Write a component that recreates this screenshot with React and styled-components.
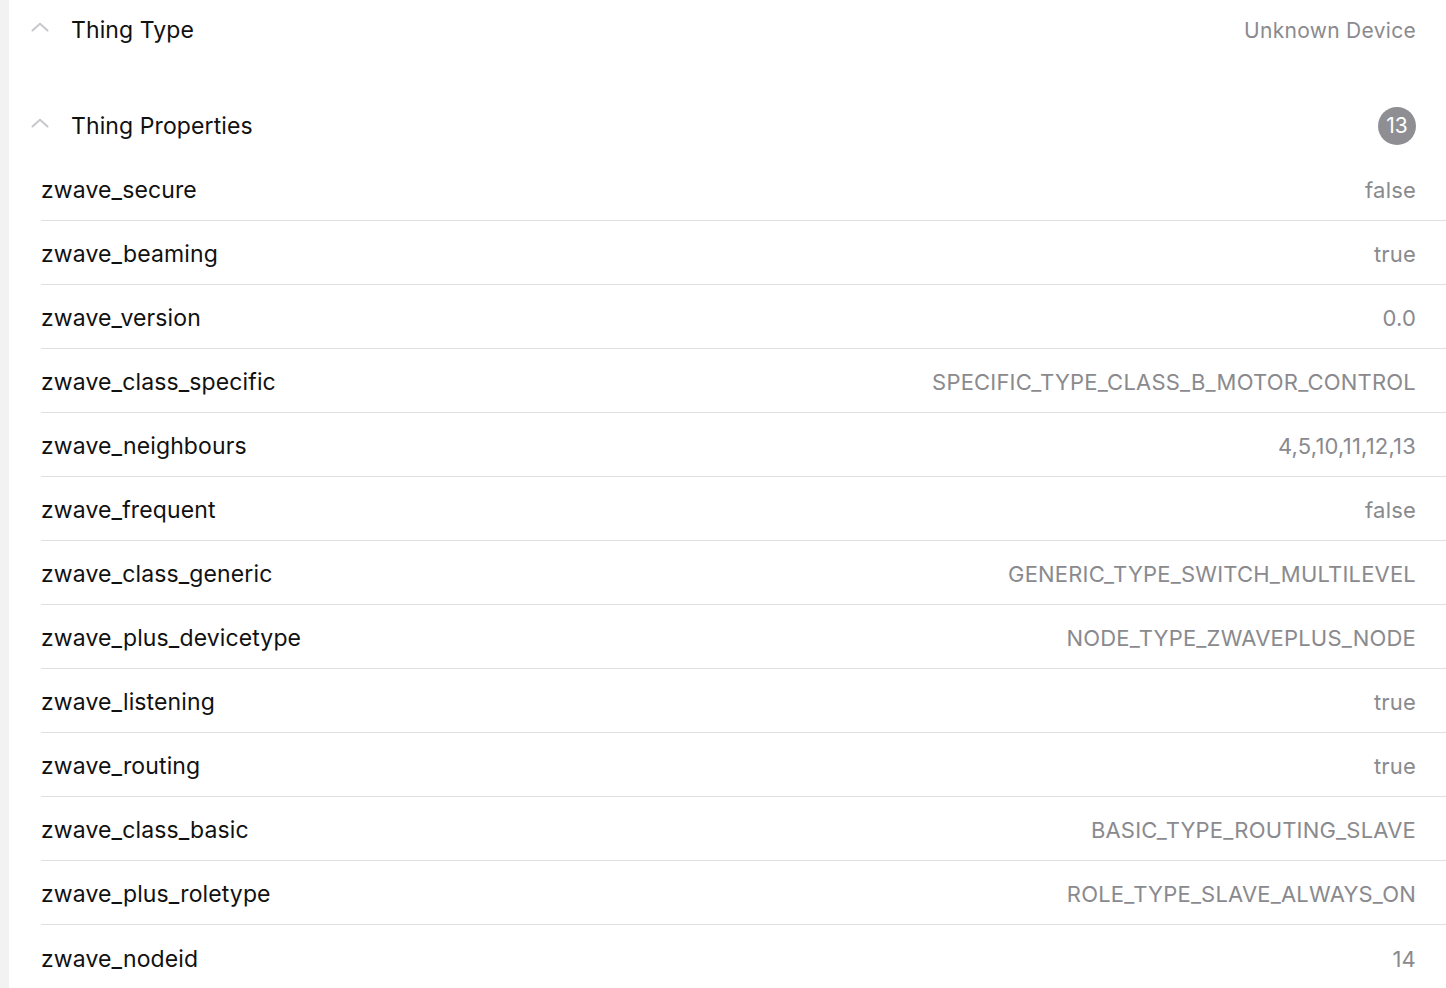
import React from "react";
import styled, { createGlobalStyle } from "styled-components";

const Global = createGlobalStyle`
  html, body { margin: 0; padding: 0; background: #ffffff; }
  body { font-family: Inter, "Noto Sans", sans-serif; -webkit-font-smoothing: antialiased; }
`;

const Page = styled.div`
  display: flex;
  min-height: 988px;
`;

const Strip = styled.div`
  width: 9px;
  flex: 0 0 9px;
  background: #f2f2f2;
`;

const Main = styled.div`
  flex: 1;
  background: #fff;
  display: flex;
  flex-direction: column;
`;

const Section = styled.section`
  display: flex;
  flex-direction: column;
  margin-bottom: ${(p) => p.$gap || 0}px;
`;

const Header = styled.div`
  height: ${(p) => p.$h || 60}px;
  box-sizing: border-box;
  display: flex;
  align-items: center;
  padding: 0 30px ${(p) => p.$pb || 0}px 22px;
`;

const Chevron = styled.svg`
  width: 18px;
  height: 10px;
  margin-right: 22px;
  margin-top: -6px;
  flex: 0 0 auto;
`;

const Title = styled.div`
  flex: 1;
  font-size: 23px;
  color: #111;
  letter-spacing: 0.1px;
`;

const HeaderValue = styled.div`
  font-size: 21px;
  letter-spacing: 0.3px;
  color: #8a8a8e;
`;

const Badge = styled.div`
  width: 38px;
  height: 38px;
  border-radius: 50%;
  background: #8e8e93;
  color: #fff;
  font-size: 21px;
  display: flex;
  align-items: center;
  justify-content: center;
`;

const List = styled.div`
  margin-left: 32px;
  display: flex;
  flex-direction: column;
`;

const Row = styled.div`
  height: 64px;
  box-sizing: border-box;
  display: flex;
  align-items: center;
  justify-content: space-between;
  padding: 3px 30px 0 0;
  border-bottom: ${(p) => (p.$last ? "none" : "1px solid #e0e0e2")};
`;

const Key = styled.div`
  font-size: 23px;
  letter-spacing: 0.12px;
  color: #111;
`;

const Value = styled.div`
  font-size: 22px;
  letter-spacing: 0.2px;
  color: #8a8a8e;
`;

const ChevronUp = () => (
  <Chevron viewBox="0 0 18 10">
    <path d="M1.5 8.5 L9 1.8 L16.5 8.5" fill="none" stroke="#c7c7cc" strokeWidth="2" strokeLinecap="round" strokeLinejoin="round" />
  </Chevron>
);

const props = [
  ["zwave_secure", "false"],
  ["zwave_beaming", "true"],
  ["zwave_version", "0.0"],
  ["zwave_class_specific", "SPECIFIC_TYPE_CLASS_B_MOTOR_CONTROL"],
  ["zwave_neighbours", "4,5,10,11,12,13"],
  ["zwave_frequent", "false"],
  ["zwave_class_generic", "GENERIC_TYPE_SWITCH_MULTILEVEL"],
  ["zwave_plus_devicetype", "NODE_TYPE_ZWAVEPLUS_NODE"],
  ["zwave_listening", "true"],
  ["zwave_routing", "true"],
  ["zwave_class_basic", "BASIC_TYPE_ROUTING_SLAVE"],
  ["zwave_plus_roletype", "ROLE_TYPE_SLAVE_ALWAYS_ON"],
  ["zwave_nodeid", "14"],
];

export default function App() {
  return (
    <>
      <Global />
      <Page>
        <Strip />
        <Main>
          <Section $gap={36}>
            <Header>
              <ChevronUp />
              <Title>Thing Type</Title>
              <HeaderValue>Unknown Device</HeaderValue>
            </Header>
          </Section>
          <Section>
            <Header $h={61} $pb={2}>
              <ChevronUp />
              <Title>Thing Properties</Title>
              <Badge>{props.length}</Badge>
            </Header>
            <List>
              {props.map(([k, v], i) => (
                <Row key={k} $last={i === props.length - 1}>
                  <Key>{k}</Key>
                  <Value>{v}</Value>
                </Row>
              ))}
            </List>
          </Section>
        </Main>
      </Page>
    </>
  );
}
